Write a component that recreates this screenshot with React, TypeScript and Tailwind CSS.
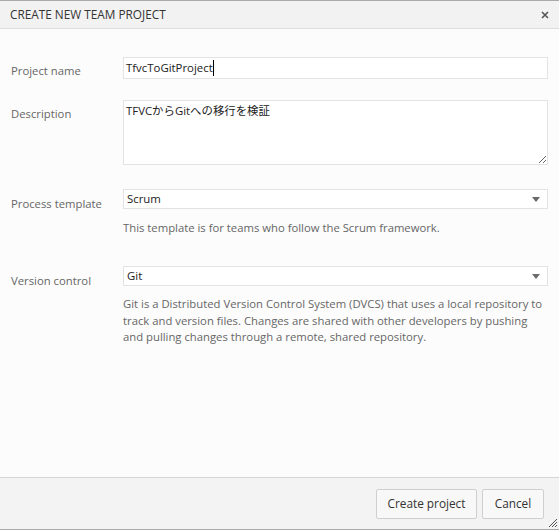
import { useState } from "react"

const font = { fontFamily: '"Open Sans", "Noto Sans CJK JP", sans-serif' }

function SelectBox({ value }: { value: string }) {
  return (
    <div className="flex items-center justify-between h-[20px] bg-white border border-[#e3e3e3] pl-[3px] pr-[7px] text-[11.4px] text-[#222]">
      <span>{value}</span>
      <svg width="8" height="5" viewBox="0 0 8 5">
        <path d="M0 0 H8 L4 5 Z" fill="#6a6a6a" />
      </svg>
    </div>
  )
}

export default function App() {
  const [name] = useState("TfvcToGitProject")

  return (
    <div className="w-[559px] h-[530px] flex flex-col bg-[#fcfcfc] border-t border-b border-[#a9a9a9] text-[11.3px]" style={font}>
      {/* Header */}
      <div className="h-[28px] flex items-center justify-between bg-[#f2f2f2] border-b border-[#dcdcdc] pl-[10px] pr-[10px]">
        <span className="text-[11.8px] text-[#333]">CREATE NEW TEAM PROJECT</span>
        <svg width="8" height="8" viewBox="0 0 8 8">
          <path d="M1 1 L7 7 M7 1 L1 7" stroke="#555" strokeWidth="1.6" />
        </svg>
      </div>

      {/* Form */}
      <div className="flex-1 pt-[28px] pl-[11px] pr-[11px]">
        <div className="grid grid-cols-[112px_minmax(0,1fr)] items-start">
          <label className="pt-[6px] leading-[16px] text-[#666]">Project name</label>
          <div className="h-[22px] flex items-center bg-white border border-[#e3e3e3] pl-[2px] text-[11.4px] text-[#222]">
            <span>{name}</span>
            <span className="w-px h-[16px] bg-black" />
          </div>

          <label className="mt-[21px] pt-[6px] leading-[16px] text-[#666]">Description</label>
          <textarea
            defaultValue="TFVCからGitへの移行を検証"
            className="mt-[21px] h-[65px] bg-white border border-[#e3e3e3] px-[2px] py-[2px] text-[11.4px] leading-[16px] text-[#222] outline-none resize"
            style={font}
          />

          <label className="mt-[24px] pt-[7px] leading-[16px] text-[#666]">Process template</label>
          <div className="mt-[24px]">
            <SelectBox value="Scrum" />
            <p className="mt-[10px] text-[#666] leading-[17px]">This template is for teams who follow the Scrum framework.</p>
          </div>

          <label className="mt-[30px] pt-[7px] leading-[16px] text-[#666]">Version control</label>
          <div className="mt-[30px]">
            <SelectBox value="Git" />
            <p className="mt-[10px] text-[#666] leading-[16.5px] whitespace-nowrap">
              Git is a Distributed Version Control System (DVCS) that uses a local repository to
              <br />
              track and version files. Changes are shared with other developers by pushing
              <br />
              and pulling changes through a remote, shared repository.
            </p>
          </div>
        </div>
      </div>

      {/* Footer */}
      <div className="h-[52px] flex items-center justify-end gap-[5px] bg-[#f3f3f3] border-t border-[#d6d6d6] pr-[15px] relative">
        <button className="h-[30px] w-[101px] bg-[#f8f8f8] border border-[#cfcfcf] rounded-[2px] text-[11.8px] text-[#333]">
          Create project
        </button>
        <button className="h-[30px] w-[62px] bg-[#f8f8f8] border border-[#cfcfcf] rounded-[2px] text-[11.8px] text-[#333]">
          Cancel
        </button>
        <svg width="10" height="10" viewBox="0 0 10 10" className="absolute right-[1px] bottom-[1px]">
          <path d="M9 1 L1 9 M9 4 L4 9 M9 7 L7 9" stroke="#555" strokeWidth="1" />
        </svg>
      </div>
    </div>
  )
}
